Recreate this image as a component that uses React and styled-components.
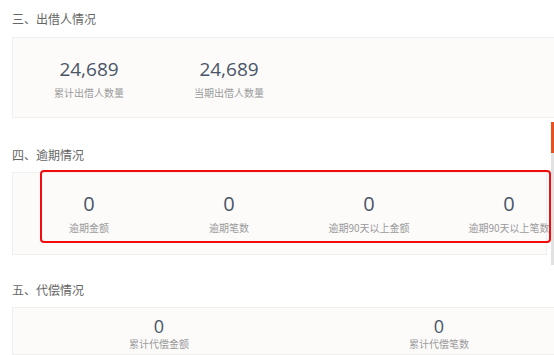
import styled, { createGlobalStyle } from "styled-components";

const GlobalStyle = createGlobalStyle`
    body {
        margin: 0;
        background: #ffffff;
        overflow: hidden;
        font-family: "Open Sans", "Noto Sans CJK SC", sans-serif;
    }
`;

const Page = styled.div`
    width: 554px;
    box-sizing: border-box;
    padding: 10px 0 0 12px;
    overflow: hidden;
`;

const Section = styled.section`
    margin-bottom: ${({ $gap }) => $gap || 0}px;
`;

const Heading = styled.h3`
    margin: 0 0 ${({ $gap }) => $gap}px 0;
    height: 18px;
    line-height: 18px;
    font-size: 12px;
    font-weight: 400;
    color: #666666;
    font-family: "Noto Sans CJK SC", sans-serif;
`;

const Card = styled.div`
    position: relative;
    box-sizing: border-box;
    width: ${({ $width }) => $width}px;
    height: ${({ $height }) => $height}px;
    padding: ${({ $compact }) => ($compact ? "9px" : "18px")} 6px 0 6px;
    background: #fcfbfa;
    border: 1px solid #f1efed;
    display: grid;
    grid-template-columns: repeat(${({ $cols }) => $cols}, ${({ $colWidth }) => $colWidth}px);
    align-content: start;
`;

const Stat = styled.div`
    display: flex;
    flex-direction: column;
    align-items: center;
    white-space: nowrap;
`;

const Value = styled.div`
    font-size: ${({ $size }) => $size}px;
    line-height: ${({ $compact }) => ($compact ? 18 : 26)}px;
    color: #4a5567;
`;

const Label = styled.div`
    margin-top: ${({ $compact }) => ($compact ? 2 : 4)}px;
    font-size: 10px;
    line-height: ${({ $compact }) => ($compact ? 13 : 14)}px;
    color: #9a9a9a;
    font-family: "Noto Sans CJK SC", sans-serif;
`;

const Highlight = styled.div`
    position: absolute;
    left: 27px;
    top: -3px;
    width: 511px;
    height: 73px;
    box-sizing: border-box;
    border: 2px solid #f20d0d;
    border-radius: 4px;
    pointer-events: none;
`;

const ScrollTrack = styled.div`
    position: fixed;
    right: 0;
    top: 122px;
    width: 3px;
    height: 143px;
    background: #e2e2e2;
`;

const ScrollThumb = styled.div`
    height: 31px;
    background: #e8511f;
`;

const sections = [
    {
        title: "三、出借人情况",
        gap: 28,
        headGap: 9,
        card: { width: 590, height: 81, cols: 4, colWidth: 140 },
        size: 19,
        stats: [
            { value: "24,689", label: "累计出借人数量" },
            { value: "24,689", label: "当期出借人数量" },
        ],
    },
    {
        title: "四、逾期情况",
        gap: 26,
        headGap: 8,
        highlight: true,
        card: { width: 535, height: 83, cols: 4, colWidth: 140 },
        size: 20,
        stats: [
            { value: "0", label: "逾期金额" },
            { value: "0", label: "逾期笔数" },
            { value: "0", label: "逾期90天以上金额" },
            { value: "0", label: "逾期90天以上笔数" },
        ],
    },
    {
        title: "五、代偿情况",
        headGap: 8,
        compact: true,
        card: { width: 590, height: 48, cols: 2, colWidth: 280 },
        size: 18,
        stats: [
            { value: "0", label: "累计代偿金额" },
            { value: "0", label: "累计代偿笔数" },
        ],
    },
];

const App = () => {
    return (
        <Page>
            <GlobalStyle />
            {sections.map((s) => (
                <Section key={s.title} $gap={s.gap}>
                    <Heading $gap={s.headGap}>{s.title}</Heading>
                    <Card
                        $width={s.card.width}
                        $height={s.card.height}
                        $cols={s.card.cols}
                        $colWidth={s.card.colWidth}
                        $compact={s.compact}
                    >
                        {s.stats.map((st) => (
                            <Stat key={st.label}>
                                <Value $size={s.size} $compact={s.compact}>{st.value}</Value>
                                <Label $compact={s.compact}>{st.label}</Label>
                            </Stat>
                        ))}
                        {s.highlight && <Highlight />}
                    </Card>
                </Section>
            ))}
            <ScrollTrack>
                <ScrollThumb />
            </ScrollTrack>
        </Page>
    );
};

export default App;
